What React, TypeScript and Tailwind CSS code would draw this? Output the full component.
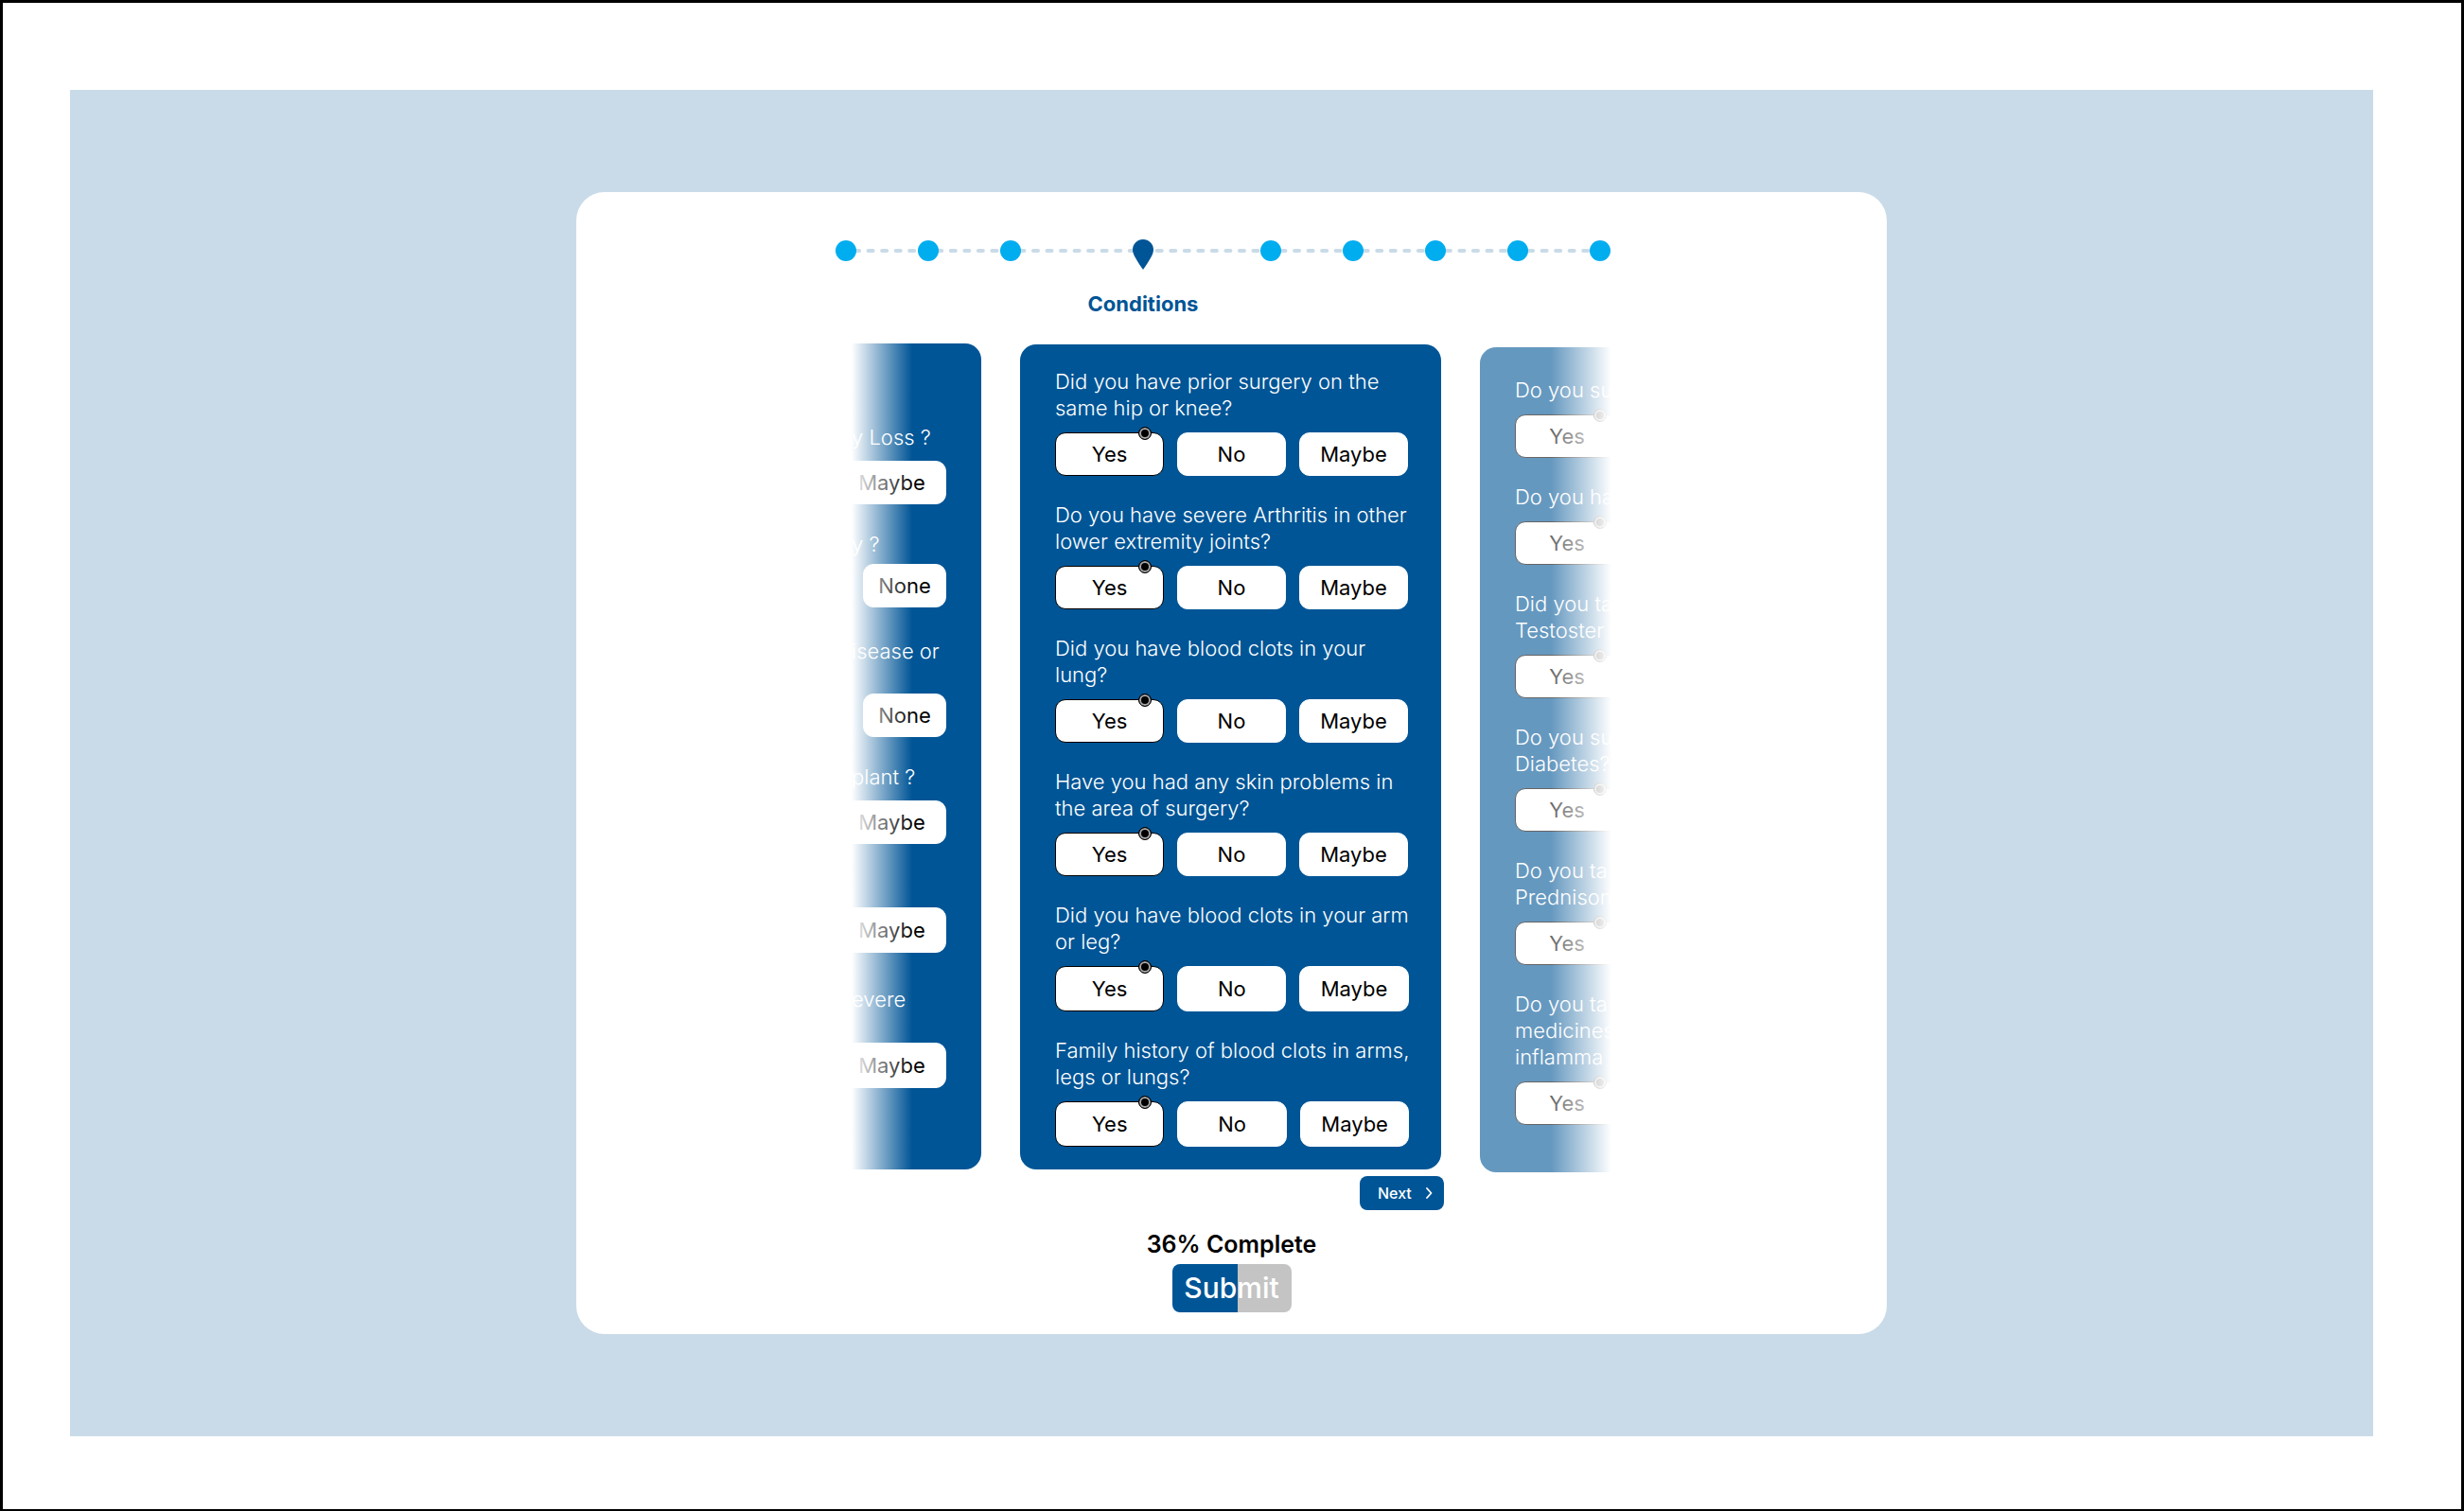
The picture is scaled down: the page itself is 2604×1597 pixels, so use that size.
import React from "react";

type Question = {
  text: string;
  options?: string[];
  tall?: boolean;
  above?: string;
  gap?: string;
};

const ANSWERS = ["Yes", "No", "Maybe"];

const CURRENT: Question[] = [
  { text: "Did you have prior surgery on the\nsame hip or knee?" },
  { text: "Do you have severe Arthritis in other\nlower extremity joints?" },
  { text: "Did you have blood clots in your\nlung?" },
  { text: "Have you had any skin problems in\nthe area of surgery?" },
  { text: "Did you have blood clots in your arm\nor leg?", tall: true },
  { text: "Family history of blood clots in arms,\nlegs or lungs?", tall: true },
];

const NEXT: Question[] = [
  { text: "Do you su", options: ["Yes"] },
  { text: "Do you ha", options: ["Yes"] },
  { text: "Did you ta\nTestoster", options: ["Yes"] },
  { text: "Do you su\nDiabetes?", options: ["Yes"] },
  { text: "Do you ta\nPrednison", options: ["Yes"] },
  { text: "Do you ta\nmedicines\ninflamma", options: ["Yes"] },
];

const PREVIOUS: Question[] = [
  { text: "y Loss ?", options: ["Maybe"] },
  { text: "y ?", options: ["None"], gap: "mt-[7px]" },
  { text: "isease or\n ", options: ["None"], above: "mt-8", gap: "mt-[3px]" },
  { text: "plant ?", options: ["Maybe"] },
  { text: " ", options: ["Maybe"], tall: true },
  { text: "evere\n ", options: ["Maybe"], tall: true, above: "mt-[35px]", gap: "mt-1" },
];

function Option({ name, label, checked, tall }: { name: string; label: string; checked?: boolean; tall?: boolean }) {
  return (
    <label
      className={`relative flex cursor-pointer items-center justify-center rounded-[11px] border border-white bg-white text-[22px] text-black has-[:checked]:border-black ${tall ? "h-12" : "h-[46px]"}`}
    >
      <input
        type="radio"
        name={name}
        defaultChecked={checked}
        className="absolute -top-[7px] right-[12px] size-[14px] appearance-none rounded-full checked:border checked:border-black checked:bg-black checked:shadow-[inset_0_0_0_2px_#a8a8a8]"
      />
      {label}
    </label>
  );
}

function QuestionCard({ id, questions, className }: { id: string; questions: Question[]; className: string }) {
  return (
    <div className={`w-[445px] shrink-0 rounded-[17px] bg-[#005596] pl-[37px] ${className}`}>
      {questions.map((q, i) => (
        <fieldset key={i} className={i === 0 ? "" : "mt-[27px]"}>
          <legend className="text-[22px] leading-7 font-light whitespace-pre text-white">{q.text}</legend>
          <div className="mt-3 grid grid-cols-3 gap-[14px]">
            {(q.options ?? ANSWERS).map((o) => (
              <Option key={o} name={`${id}-${i}`} label={o} checked={o === "Yes"} tall={q.tall} />
            ))}
          </div>
        </fieldset>
      ))}
    </div>
  );
}

function PreviousCard() {
  return (
    <div className="rounded-r-[17px] bg-[#005596] pt-[85px] pb-[86px]">
      {PREVIOUS.map((q, i) => {
        const label = q.options![0];
        return (
          <fieldset key={i} className={i === 0 ? "" : (q.above ?? "mt-7")}>
            <legend className="text-[22px] leading-7 font-light whitespace-pre text-white">{q.text}</legend>
            <div className={`${q.gap ?? "mt-[11px]"} ${label === "None" ? "mr-[37px] ml-3" : "mr-[37px] -ml-[15px]"}`}>
              <Option name={`previous-${i}`} label={label} tall={q.tall} />
            </div>
          </fieldset>
        );
      })}
    </div>
  );
}

function Dot() {
  return <li className="mt-px size-[22px] shrink-0 rounded-full bg-[#00adef]" />;
}

function Stepper() {
  return (
    <div className="mx-auto flex pr-[19px]">
      <div className="relative">
        <svg className="absolute top-[10px] left-[11px] h-1 w-[796px]" viewBox="0 0 796 4" aria-hidden="true">
          <line x1="2" y1="2" x2="796" y2="2" stroke="#c9dbe8" strokeWidth="3.8" strokeLinecap="round" strokeDasharray="5.2 9.33" strokeDashoffset="-7" />
        </svg>
        <ol className="relative flex gap-[65px]">
          <Dot />
          <Dot />
          <Dot />
          <li className="flex w-[123px] flex-col items-center pl-1.5" aria-current="step">
            <svg className="h-8 w-[22px]" viewBox="0 0 22 32" aria-hidden="true">
              <path d="M11 0C4.9 0 0 4.800 0 11c0 2.500.9 4.700 2.100 7C4.600 22.600 8 28 11 32c3-4 6.400-9.400 8.900-14 1.200-2.300 2.100-4.500 2.100-7C22 4.800 17.100 0 11 0z" fill="#005596" />
            </svg>
            <span className="mt-5 text-[22px] leading-8 font-bold whitespace-nowrap text-[#005596]">Conditions</span>
          </li>
          <Dot />
          <Dot />
          <Dot />
          <Dot />
          <Dot />
        </ol>
      </div>
    </div>
  );
}

export default function App() {
  return (
    <div className="flex min-h-screen flex-col border-[3px] border-black bg-white pt-[92px] pr-[93px] pb-[77px] pl-[71px] font-['Inter',sans-serif]">
      <main className="flex flex-1 items-center justify-center bg-[#c9dbe8] py-[108px] pl-[21px]">
        <form className="flex w-full max-w-[1385px] flex-col items-center rounded-[30px] bg-white pt-[50px] pb-[23px]" onSubmit={(e) => e.preventDefault()}>
          <Stepper />

          <div className="mt-[26px] grid grid-cols-[137px_445px_139px] items-start gap-[41px]">
            <div className="relative overflow-hidden">
              <PreviousCard />
              <div className="pointer-events-none absolute inset-y-0 left-0 w-16 bg-linear-to-r from-white to-white/0" />
            </div>
            <QuestionCard id="current" questions={CURRENT} className="mt-px pt-[25px] pr-[35px] pb-6" />
            <div className="relative mt-1 overflow-hidden">
              <QuestionCard id="next" questions={NEXT} className="pt-[31px] pr-[50px] pb-[50px] opacity-60" />
              <div className="pointer-events-none absolute inset-y-0 right-0 w-16 bg-linear-to-l from-white to-white/0" />
            </div>
          </div>

          <div className="mt-1 flex w-[449px] justify-end">
            <button type="button" className="flex h-9 w-[89px] items-center justify-between rounded-lg bg-[#005596] pr-3 pl-[19px] text-base font-medium text-white">
              Next
              <svg className="h-3 w-2" viewBox="0 0 8 12" fill="none" stroke="currentColor" strokeWidth="1.8" strokeLinecap="round" strokeLinejoin="round" aria-hidden="true">
                <path d="M2 1l4.500 5L2 11" />
              </svg>
            </button>
          </div>

          <p className="mt-5 text-[25px] leading-8 font-semibold text-black">36% Complete</p>
          <button type="submit" className="mt-[5px] h-[51px] w-[126px] rounded-lg bg-linear-to-r from-[#005596] from-55% to-[#c4c4c4] to-55% text-[30px] font-medium text-white">
            Submit
          </button>
        </form>
      </main>
    </div>
  );
}
